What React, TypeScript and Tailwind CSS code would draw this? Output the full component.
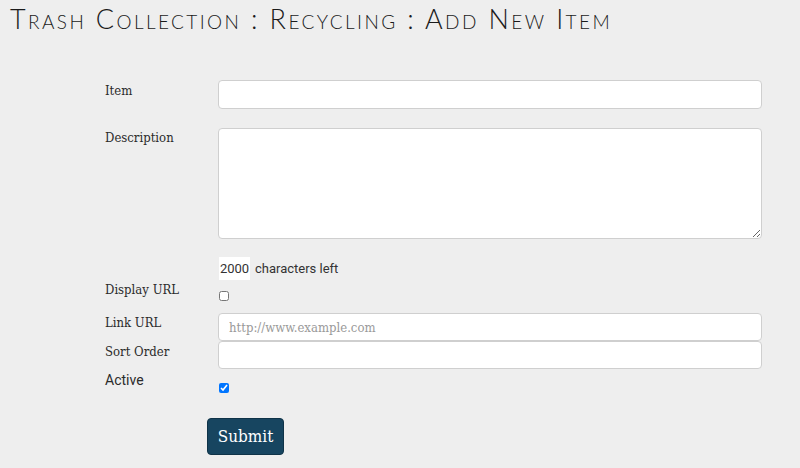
import { useState } from 'react';

const slab = { fontFamily: '"DejaVu Serif Condensed", "DejaVu Serif", serif' };
const sans = { fontFamily: 'Roboto, "Liberation Sans", sans-serif' };

function FieldRow({ label, children, labelClass = '', rowClass = '', labelFont = slab }: { label: string; children: React.ReactNode; labelClass?: string; rowClass?: string; labelFont?: React.CSSProperties }) {
  return (
    <div className={`flex items-start ${rowClass}`}>
      <div className={`w-[113px] shrink-0 text-[13px] text-[#2b2b2b] leading-[18px] ${labelClass}`} style={labelFont}>
        {label}
      </div>
      <div className="flex-1">{children}</div>
    </div>
  );
}

export default function App() {
  const [desc, setDesc] = useState('');
  const [active, setActive] = useState(true);
  const [display, setDisplay] = useState(false);

  const inputCls =
    'w-full bg-white border border-[#cfcfcf] rounded-[4px] px-[10px] text-[13px] text-[#333] outline-none placeholder:text-[#9a9a9a]';

  return (
    <div className="w-[800px] h-[468px] bg-[#eeeeee] overflow-hidden">
      <h1
        className="pl-[10px] pt-[2px] text-[27px] leading-[34px] font-light text-[#1a1a1a] tracking-[2.4px]"
        style={{ fontFamily: 'Lato, "Open Sans", sans-serif', fontVariant: 'small-caps' }}
      >
        Trash Collection : Recycling : Add New Item
      </h1>

      <form className="pl-[105px] pr-[38px] pt-[44px]" onSubmit={(e) => e.preventDefault()}>
        <FieldRow label="Item" labelClass="pt-[2px]">
          <input type="text" className={`${inputCls} h-[29px]`} style={slab} />
        </FieldRow>

        <FieldRow label="Description" labelClass="pt-[1px]" rowClass="mt-[19px]">
          <textarea
            value={desc}
            onChange={(e) => setDesc(e.target.value)}
            className={`${inputCls} h-[111px] block py-[6px]`}
            style={slab}
          />
        </FieldRow>

        <div className="flex mt-[18px] pl-[114px] items-center text-[13px] text-[#333]" style={sans}>
          <span className="bg-white h-[23px] w-[31px] flex items-center justify-center">{2000 - desc.length}</span>
          <span className="ml-[5px]">characters left</span>
        </div>

        <FieldRow label="Display URL" rowClass="mt-[1px] h-[32px]">
          <input
            type="checkbox"
            checked={display}
            onChange={(e) => setDisplay(e.target.checked)}
            className="mt-[10px] ml-[1px] w-[10px] h-[10px] block m-0"
          />
        </FieldRow>

        <FieldRow label="Link URL" labelClass="pt-[1px]">
          <input type="text" placeholder="http://www.example.com" className={`${inputCls} h-[28px]`} style={slab} />
        </FieldRow>

        <FieldRow label="Sort Order" labelClass="pt-[2px]">
          <input type="text" className={`${inputCls} h-[28px]`} style={slab} />
        </FieldRow>

        <FieldRow label="Active" labelClass="pt-[2px] !text-[14px]" rowClass="h-[49px]" labelFont={sans}>
          <input
            type="checkbox"
            checked={active}
            onChange={(e) => setActive(e.target.checked)}
            className="mt-[14px] ml-[1px] w-[10px] h-[10px] block m-0"
          />
        </FieldRow>

        <div className="pl-[102px]">
          <button
            type="submit"
            className="h-[37px] w-[77px] bg-[#174560] text-white text-[17px] rounded-[4px] border border-[#0f3348]"
            style={slab}
          >
            Submit
          </button>
        </div>
      </form>
    </div>
  );
}
